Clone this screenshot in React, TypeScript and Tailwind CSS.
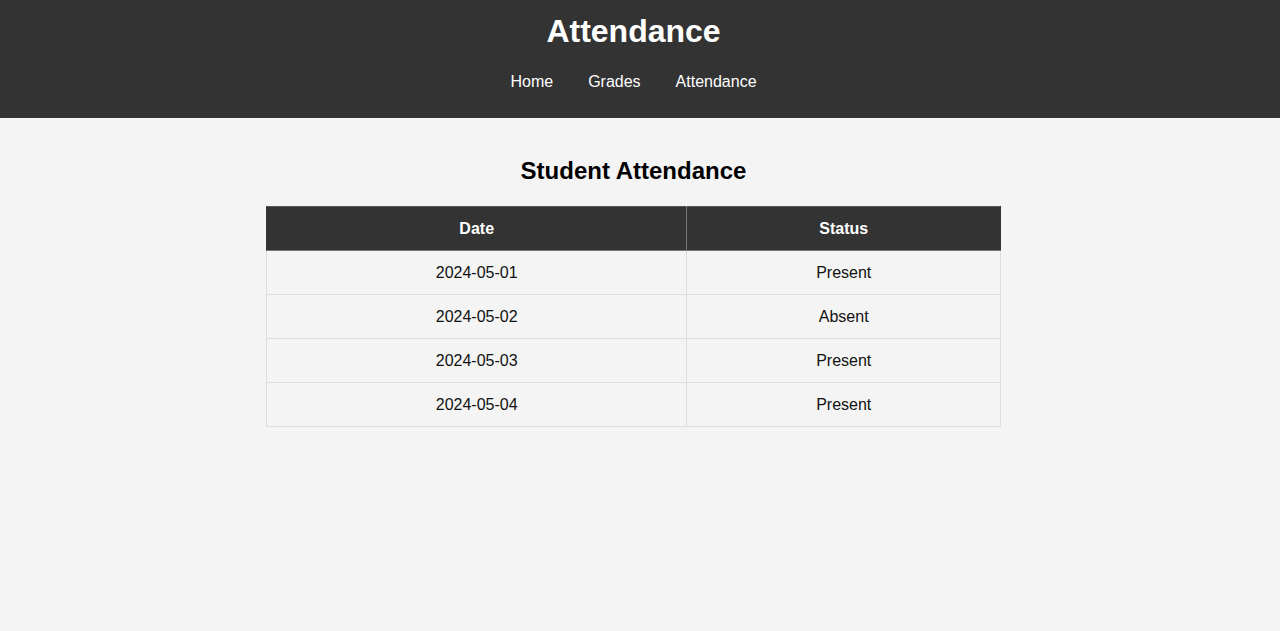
import React from "react";

const rows = [
  { date: "2024-05-01", status: "Present" },
  { date: "2024-05-02", status: "Absent" },
  { date: "2024-05-03", status: "Present" },
  { date: "2024-05-04", status: "Present" },
];

export default function App() {
  return (
    <div
      className="min-h-[631px] bg-[#f4f4f4] text-[#111]"
      style={{ fontFamily: '"Liberation Sans", Arial, sans-serif' }}
    >
      <header className="bg-[#333] text-white h-[118px] pr-[13px] flex flex-col items-center">
        <h1 className="mt-[13px] text-[32px] leading-[37px] font-bold">Attendance</h1>
        <nav className="mt-[23px] flex gap-[35px] text-[16px] leading-[18px]">
          <a>Home</a>
          <a>Grades</a>
          <a>Attendance</a>
        </nav>
      </header>
      <main className="pr-[13px] flex flex-col items-center">
        <h2 className="mt-[39px] text-[24px] leading-[28px] font-bold text-black">
          Student Attendance
        </h2>
        <table className="mt-[21px] w-[735px] border-collapse text-[16px]">
          <thead>
            <tr className="h-[44px] bg-[#333] text-white">
              <th className="w-[421px] border border-[#777] border-l-[#333] border-t-[#555] font-bold">Date</th>
              <th className="w-[314px] border border-[#777] border-r-[#333] border-t-[#555] font-bold">Status</th>
            </tr>
          </thead>
          <tbody>
            {rows.map((r) => (
              <tr key={r.date} className="h-[44px]">
                <td className="border border-[#ddd] text-center">{r.date}</td>
                <td className="border border-[#ddd] text-center">{r.status}</td>
              </tr>
            ))}
          </tbody>
        </table>
      </main>
    </div>
  );
}
